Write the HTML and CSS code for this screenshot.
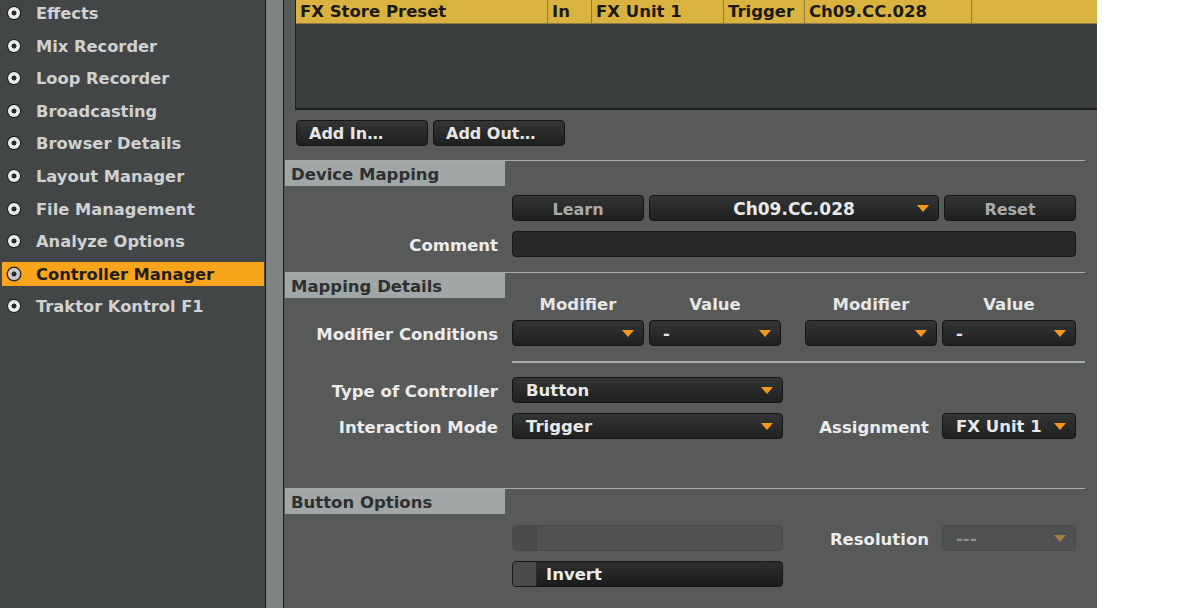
FILE: index.html
```html
<!DOCTYPE html>
<html lang="en">
<head>
  <meta charset="UTF-8">
  <title>Preferences - Controller Manager</title>
  <link rel="stylesheet" href="styles.css">
</head>
<body>
  <div class="app">
    <aside class="sidebar">
      <ul class="nav">
        <li class="nav-item"><span class="radio"></span>Effects</li>
        <li class="nav-item"><span class="radio"></span>Mix Recorder</li>
        <li class="nav-item"><span class="radio"></span>Loop Recorder</li>
        <li class="nav-item"><span class="radio"></span>Broadcasting</li>
        <li class="nav-item"><span class="radio"></span>Browser Details</li>
        <li class="nav-item"><span class="radio"></span>Layout Manager</li>
        <li class="nav-item"><span class="radio"></span>File Management</li>
        <li class="nav-item"><span class="radio"></span>Analyze Options</li>
        <li class="nav-item active"><span class="radio"></span>Controller Manager</li>
        <li class="nav-item"><span class="radio"></span>Traktor Kontrol F1</li>
      </ul>
    </aside>
    <div class="splitter"></div>

    <main class="panel">
      <div class="table">
        <div class="table-head">
          <div class="cell">FX Store Preset</div>
          <div class="cell">In</div>
          <div class="cell">FX Unit 1</div>
          <div class="cell">Trigger</div>
          <div class="cell">Ch09.CC.028</div>
          <div class="cell last"></div>
        </div>
        <div class="table-body"></div>
      </div>

      <div class="add-buttons">
        <button class="btn">Add In…</button>
        <button class="btn">Add Out…</button>
      </div>

      <!-- Device Mapping -->
      <section class="section">
        <h2 class="section-head">Device Mapping</h2>
        <div class="row first">
          <span class="label"></span>
          <div class="controls">
            <button class="btn dim w132">Learn</button>
            <div class="select center w290">Ch09.CC.028</div>
            <button class="btn dim w132">Reset</button>
          </div>
        </div>
        <div class="row">
          <span class="label">Comment</span>
          <div class="controls">
            <div class="field"></div>
          </div>
        </div>
      </section>

      <!-- Mapping Details -->
      <section class="section details">
        <h2 class="section-head">Mapping Details</h2>
        <div class="row col-labels">
          <span class="label"></span>
          <div class="controls">
            <span class="col-label w132">Modifier</span>
            <span class="col-label w132">Value</span>
            <span class="col-label w132 far">Modifier</span>
            <span class="col-label w134">Value</span>
          </div>
        </div>
        <div class="row mod-row">
          <span class="label">Modifier Conditions</span>
          <div class="controls">
            <div class="select w132"></div>
            <div class="select w132">-</div>
            <div class="select w132 far"></div>
            <div class="select w134">-</div>
          </div>
        </div>
        <div class="divider"></div>
        <div class="row after-divider">
          <span class="label">Type of Controller</span>
          <div class="controls">
            <div class="select w271">Button</div>
          </div>
        </div>
        <div class="row">
          <span class="label">Interaction Mode</span>
          <div class="controls">
            <div class="select w271">Trigger</div>
            <span class="inline-label">Assignment</span>
            <div class="select w134">FX Unit 1</div>
          </div>
        </div>
      </section>

      <!-- Button Options -->
      <section class="section">
        <h2 class="section-head">Button Options</h2>
        <div class="row first-opt">
          <span class="label"></span>
          <div class="controls">
            <div class="toggle disabled"><span class="toggle-box"></span></div>
            <span class="inline-label">Resolution</span>
            <div class="select w134 disabled">---</div>
          </div>
        </div>
        <div class="row">
          <span class="label"></span>
          <div class="controls">
            <div class="toggle"><span class="toggle-box"></span><span class="toggle-text">Invert</span></div>
          </div>
        </div>
      </section>
    </main>
  </div>
</body>
</html>
```

FILE: styles.css
```css
* {
  box-sizing: border-box;
}

body {
  margin: 0;
  background: #fff;
  font-family: "DejaVu Sans", Verdana, sans-serif;
  font-weight: bold;
  font-size: 16.5px;
}

.app {
  display: flex;
  height: 608px;
  overflow: hidden;
}

/* left navigation */
.sidebar {
  width: 266px;
  flex-shrink: 0;
  background: #434647;
  border-right: 1px solid #1b1c1c;
}

.nav {
  list-style: none;
  margin: 0;
  padding: 1px 0 0;
}

.nav-item {
  display: flex;
  align-items: center;
  gap: 16px;
  height: 24px;
  margin: 0 1px 8.6px 2px;
  padding-left: 6px;
  padding-top: 1px;
  color: #d0d1d1;
  font-size: 16.3px;
  white-space: nowrap;
}

.nav-item.active {
  background: #f9a51b;
  color: #1f1f1f;
}

.radio {
  width: 12px;
  height: 12px;
  flex-shrink: 0;
  margin-top: -1px;
  border-radius: 50%;
  background: radial-gradient(circle, #2a2b2b 0 2.2px, #ebebeb 2.8px);
  box-shadow: 0 0 0 1px #1c1d1d;
}

.nav-item.active .radio {
  background: radial-gradient(circle, #2a2b2b 0 2.2px, #c9c9c9 2.8px);
  box-shadow: 0 0 0 1.5px #2a2a2a;
}

.splitter {
  width: 18px;
  flex-shrink: 0;
  background: #7f8384;
  border-right: 1px solid #1b1c1c;
}

/* main panel */
.panel {
  width: 813px;
  flex-shrink: 0;
  background: #585959;
}

.table {
  margin-left: 11px;
  border-left: 1px solid #222;
  border-bottom: 2px solid #1f2020;
}

.table-head {
  display: grid;
  grid-template-columns: 252px 44px 132px 81px 167px 1fr;
  height: 24px;
  background: #d9b23f;
  border-bottom: 1px solid #8d7c48;
}

.cell {
  padding-left: 4px;
  line-height: 24px;
  color: #1b1a14;
  border-right: 1px solid #8e7b40;
  white-space: nowrap;
}

.cell.last {
  border-right: none;
}

.table-body {
  height: 84px;
  background: #3a3e3f;
}

.add-buttons {
  display: flex;
  gap: 5px;
  margin: 10px 0 0 12px;
}

.btn {
  width: 132px;
  height: 26px;
  padding: 1px 12px 0;
  border: 1px solid #141515;
  border-radius: 4px;
  background: linear-gradient(#343535, #1e1f1f);
  color: #e6e6e6;
  font: inherit;
  font-size: 16px;
  text-align: left;
}

.btn.dim {
  padding-top: 2px;
  color: #a9aaaa;
  text-align: center;
}

/* sections */
.section {
  width: 800px;
  margin-left: 1px;
  border-top: 1px solid #a7abab;
  padding-bottom: 15px;
}

.add-buttons + .section {
  margin-top: 14px;
}

.details {
  padding-bottom: 49px;
}

.section-head {
  width: 220px;
  height: 25px;
  margin: 0;
  padding-left: 6px;
  background: #a1a6a6;
  color: #2d3030;
  font-size: 16.5px;
  line-height: 28px;
  overflow: hidden;
}

.row {
  display: grid;
  grid-template-columns: 213px 564px;
  column-gap: 14px;
  align-items: center;
  height: 26px;
  margin-top: 10px;
}

.row.first {
  margin-top: 9px;
}

.row.col-labels {
  height: 20px;
  margin-top: -7px;
}

.row.mod-row {
  margin-top: 9px;
}

.row.after-divider {
  margin-top: 14px;
}

.row.first-opt {
  margin-top: 11px;
}

.label {
  padding-top: 3px;
  text-align: right;
  color: #ececec;
  white-space: nowrap;
}

.controls {
  display: flex;
  align-items: center;
  gap: 5px;
  height: 26px;
}

.col-label {
  color: #e6e6e6;
  text-align: center;
}

.far {
  margin-left: 19px;
}

.w132 { width: 132px; }
.w134 { width: 134px; }
.w271 { width: 271px; }
.w290 { width: 290px; }

.select {
  position: relative;
  height: 26px;
  padding: 2px 0 0 13px;
  border: 1px solid #141515;
  border-radius: 4px;
  background: linear-gradient(#333434, #1f2020);
  color: #e8e8e8;
  line-height: 22px;
  white-space: nowrap;
}

.select::after {
  content: "";
  position: absolute;
  right: 9px;
  top: 9px;
  border-left: 6px solid transparent;
  border-right: 6px solid transparent;
  border-top: 7px solid #f7981d;
}

.select.center {
  padding-left: 0;
  text-align: center;
  font-size: 17px;
}

.select.disabled {
  background: #4f5050;
  border-color: #4a4b4b;
  color: #8f9090;
}

.select.disabled::after {
  border-top-color: #a27b45;
}

.field {
  width: 564px;
  height: 26px;
  border: 1px solid #141515;
  border-radius: 4px;
  background: #282929;
}

.divider {
  width: 573px;
  height: 2px;
  margin: 15px 0 0 227px;
  background: #a9adad;
}

.inline-label {
  margin-left: auto;
  margin-right: 8px;
  padding-top: 3px;
  color: #ececec;
}

.toggle {
  display: flex;
  width: 271px;
  height: 26px;
  border: 1px solid #161717;
  border-radius: 4px;
  background: linear-gradient(#2d2e2e, #1b1c1c);
  overflow: hidden;
}

.toggle.disabled {
  background: #505151;
  border-color: #4a4b4b;
}

.toggle-box {
  width: 24px;
  flex-shrink: 0;
  background: #4a4b4b;
  border-right: 1px solid #2b2c2c;
}

.toggle.disabled .toggle-box {
  background: #4a4b4b;
  border-right-color: #444545;
}

.toggle-text {
  padding: 2px 0 0 9px;
  line-height: 22px;
  color: #ececec;
}
```
